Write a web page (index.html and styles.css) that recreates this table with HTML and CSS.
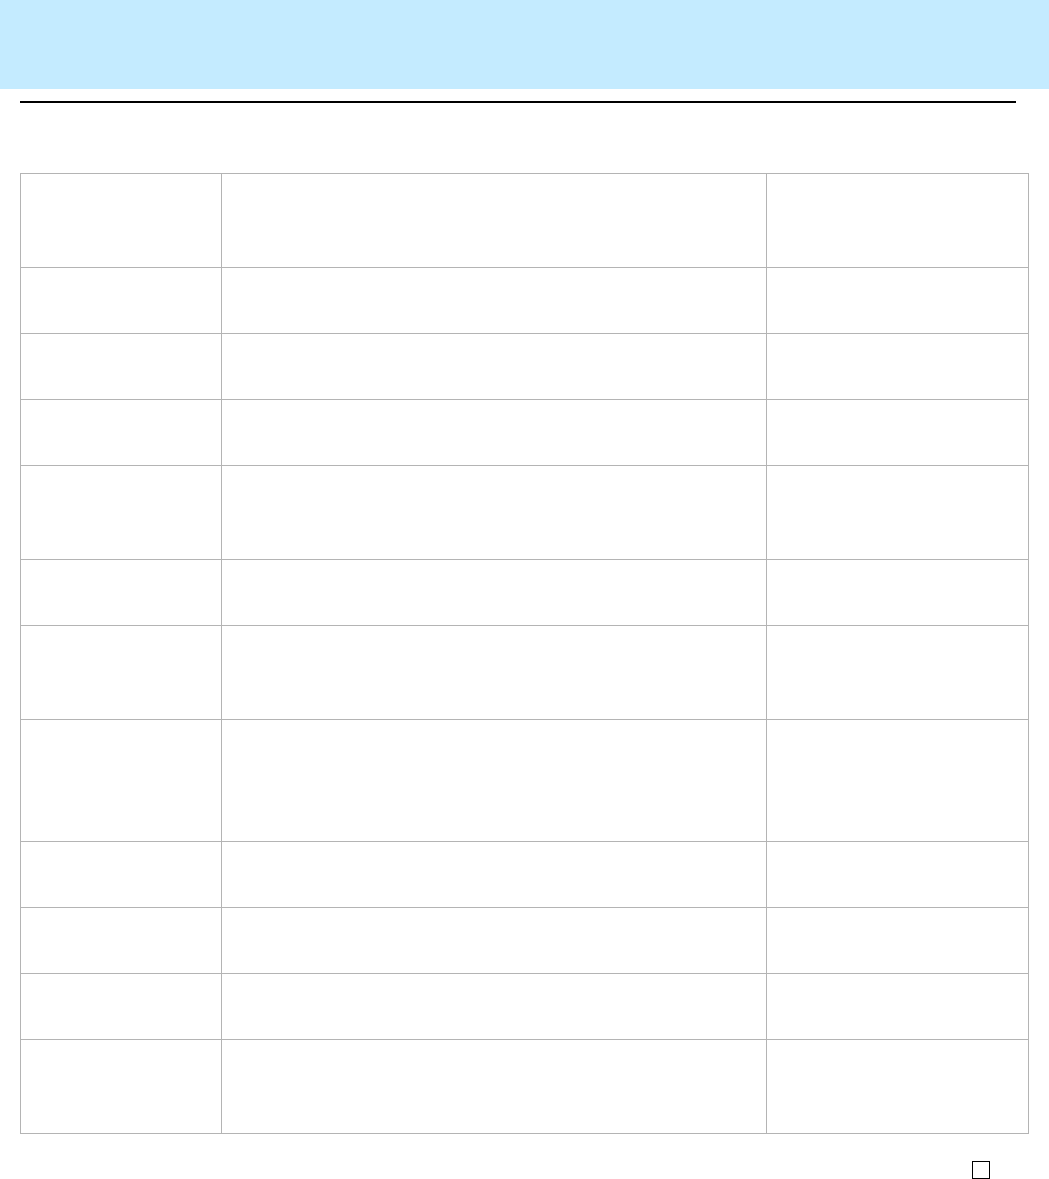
FILE: index.html
```html
<html lang="en">
  <head>
    <meta charset="UTF-8" />
    <meta name="viewport" content="width=device-width, initial-scale=1.0" />
    <title>Table Page</title>
    <link rel="stylesheet" href="styles.css">
  </head>
  <body>
    <header class="banner"></header>
    <!-- 상단 제목 아래 구분선 -->
    <div class="page">
      <hr class="rule" />
      <table class="grid">
        <colgroup>
          <col class="c1" />
          <col class="c2" />
          <col class="c3" />
        </colgroup>
        <tbody>
          <tr class="h2"><td></td><td></td><td></td></tr>
          <tr class="h1"><td></td><td></td><td></td></tr>
          <tr class="h1"><td></td><td></td><td></td></tr>
          <tr class="h1"><td></td><td></td><td></td></tr>
          <tr class="h2"><td></td><td></td><td></td></tr>
          <tr class="h1"><td></td><td></td><td></td></tr>
          <tr class="h2"><td></td><td></td><td></td></tr>
          <tr class="h3"><td></td><td></td><td></td></tr>
          <tr class="h1"><td></td><td></td><td></td></tr>
          <tr class="h1"><td></td><td></td><td></td></tr>
          <tr class="h1"><td></td><td></td><td></td></tr>
          <tr class="h2"><td></td><td></td><td></td></tr>
        </tbody>
      </table>
      <div class="foot">
        <span class="box"></span>
      </div>
    </div>
  </body>
</html>
```

FILE: styles.css
```css
body {
  margin: 0;
  font-family: "Liberation Sans", Arial, sans-serif;
  background: #fff;
}

.banner {
  display: block;
  height: 89px;
  background-color: #c4ebff;
}

.page {
  padding: 0 0 0 20px;
}

.rule {
  margin: 12px 0 0 0;
  width: 996px;
  height: 2px;
  border: none;
  background: #000;
}

.grid {
  margin-top: 70px;
  border-collapse: collapse;
  table-layout: fixed;
  width: 1008px;
}
.grid td {
  border: 1px solid #b4b4b4;
  padding: 0;
}
.grid .c1 { width: 201px; }
.grid .c2 { width: 545px; }
.grid .c3 { width: 262px; }

/* 행 높이: 한 줄 66, 두 줄 94, 세 줄 122 */
.grid .h1 td { height: 66px; }
.grid .h2 td { height: 94px; }
.grid .h3 td { height: 122px; }

.foot {
  display: flex;
  justify-content: flex-end;
  padding: 27px 59px 0 0;
}
.box {
  display: block;
  width: 16px;
  height: 16px;
  border: 1px solid #000;
}
```
